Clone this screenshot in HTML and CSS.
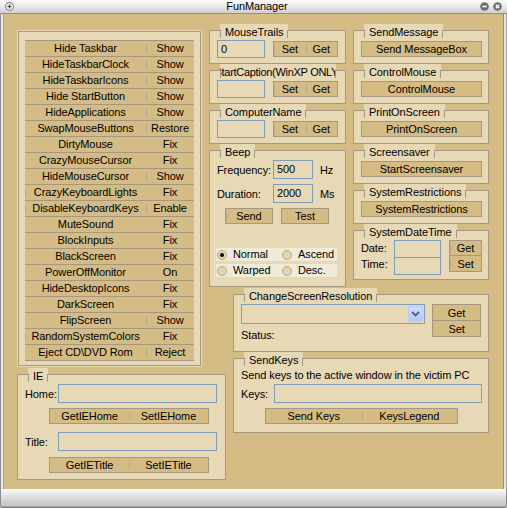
FILE: index.html
```html
<!DOCTYPE html>
<html>
<head>
<meta charset="utf-8">
<title>FunManager</title>
<link rel="stylesheet" href="styles.css">
</head>
<body>
<div class="win">
  <div class="title">
    <div class="tl">
      <svg class="tico" width="9" height="9" viewBox="0 0 9 9"><circle cx="4.5" cy="4.5" r="4" fill="#f4f4f4" stroke="#7a7a7a"/><path d="M4.5 2.5v4M2.5 4.5h4" stroke="#444" stroke-width="1.2"/></svg>
    </div>
    <div class="ttext">FunManager</div>
    <div class="tr">
      <svg class="tico" width="9" height="9" viewBox="0 0 9 9"><circle cx="4.5" cy="4.5" r="4.3" fill="#6e6e6e"/><path d="M2.3 4.5h4.4" stroke="#fff" stroke-width="1.6"/></svg>
      <svg class="tico" width="9" height="9" viewBox="0 0 9 9"><circle cx="4.5" cy="4.5" r="4.3" fill="#6e6e6e"/><path d="M2.8 2.8l3.4 3.4M6.2 2.8l-3.4 3.4" stroke="#fff" stroke-width="1.4"/></svg>
    </div>
  </div>
  <div class="mid">
    <div class="side"></div>
    <div class="client">
      <div class="pnl">
        <div class="pnl-in">
          <div class="row"><span class="bl">Hide Taskbar</span><span class="br tk">Show</span></div>
          <div class="row"><span class="bl">HideTaskbarClock</span><span class="br tk">Show</span></div>
          <div class="row"><span class="bl">HideTaskbarIcons</span><span class="br tk">Show</span></div>
          <div class="row"><span class="bl">Hide StartButton</span><span class="br tk">Show</span></div>
          <div class="row"><span class="bl">HideApplications</span><span class="br tk">Show</span></div>
          <div class="row"><span class="bl">SwapMouseButtons</span><span class="br tk">Restore</span></div>
          <div class="row"><span class="bl">DirtyMouse</span><span class="br">Fix</span></div>
          <div class="row"><span class="bl">CrazyMouseCursor</span><span class="br">Fix</span></div>
          <div class="row"><span class="bl">HideMouseCursor</span><span class="br tk">Show</span></div>
          <div class="row"><span class="bl lt">CrazyKeyboardLights</span><span class="br">Fix</span></div>
          <div class="row"><span class="bl lt">DisableKeyboardKeys</span><span class="br tk">Enable</span></div>
          <div class="row"><span class="bl">MuteSound</span><span class="br">Fix</span></div>
          <div class="row"><span class="bl">BlockInputs</span><span class="br">Fix</span></div>
          <div class="row"><span class="bl">BlackScreen</span><span class="br">Fix</span></div>
          <div class="row"><span class="bl">PowerOffMonitor</span><span class="br">On</span></div>
          <div class="row"><span class="bl">HideDesktopIcons</span><span class="br">Fix</span></div>
          <div class="row"><span class="bl">DarkScreen</span><span class="br">Fix</span></div>
          <div class="row"><span class="bl">FlipScreen</span><span class="br tk">Show</span></div>
          <div class="row"><span class="bl lt">RandomSystemColors</span><span class="br">Fix</span></div>
          <div class="row"><span class="bl">Eject CD\DVD Rom</span><span class="br tk">Reject</span></div>
        </div>
      </div>

      <div class="ie">
        <div class="fr fr-ie">
          <div class="cap">IE</div>
          <div class="frow"><span class="lab w33">Home:</span><span class="tb w160"></span></div>
          <div class="pair w160 ml24 mt5"><span>GetIEHome</span><span>SetIEHome</span></div>
          <div class="frow mt8"><span class="lab w33">Title:</span><span class="tb w160"></span></div>
          <div class="pair w160 ml24 mt6"><span>GetIETitle</span><span>SetIETitle</span></div>
        </div>
      </div>

      <div class="colm">
        <div class="fr h34 fr-tb">
          <div class="cap">MouseTrails</div>
          <span class="tb w48">0</span>
          <div class="pair w65 mt1"><span class="tk">Set</span><span>Get</span></div>
        </div>
        <div class="fr h34 fr-tb">
          <div class="cap cap-clip">StartCaption(WinXP ONLY)</div>
          <span class="tb w48"></span>
          <div class="pair w65 mt1"><span class="tk">Set</span><span>Get</span></div>
        </div>
        <div class="fr h34 fr-tb">
          <div class="cap">ComputerName</div>
          <span class="tb w48"></span>
          <div class="pair w65 mt1"><span class="tk">Set</span><span>Get</span></div>
        </div>
        <div class="fr fr-beep">
          <div class="cap">Beep</div>
          <div class="frow"><span class="lab w56">Frequency:</span><span class="tb w40">500</span><span class="unit">Hz</span></div>
          <div class="frow mt5"><span class="lab w56">Duration:</span><span class="tb w40">2000</span><span class="unit">Ms</span></div>
          <div class="btnrow">
            <span class="btn w48 tkl">Send</span>
            <span class="btn w48">Test</span>
          </div>
          <div class="radios">
            <div class="rrow">
              <span class="ropt"><span class="rd on"></span>Normal</span>
              <span class="ropt"><span class="rd"></span>Ascend</span>
            </div>
            <div class="rrow">
              <span class="ropt"><span class="rd"></span>Warped</span>
              <span class="ropt"><span class="rd"></span>Desc.</span>
            </div>
          </div>
        </div>
      </div>

      <div class="colr">
        <div class="fr h34 fr-r">
          <div class="cap">SendMessage</div>
          <span class="btn full">Send MessageBox</span>
        </div>
        <div class="fr h34 fr-r">
          <div class="cap">ControlMouse</div>
          <span class="btn full">ControlMouse</span>
        </div>
        <div class="fr h34 fr-r">
          <div class="cap">PrintOnScreen</div>
          <span class="btn full">PrintOnScreen</span>
        </div>
        <div class="fr h34 fr-r">
          <div class="cap">Screensaver</div>
          <span class="btn full">StartScreensaver</span>
        </div>
        <div class="fr h34 fr-r">
          <div class="cap">SystemRestrictions</div>
          <span class="btn full">SystemRestrictions</span>
        </div>
        <div class="fr fr-dt">
          <div class="cap">SystemDateTime</div>
          <div class="dtl"><span>Date:</span><span>Time:</span></div>
          <div class="tbstack"><span></span><span></span></div>
          <div class="bstack w33"><span class="tkl">Get</span><span class="tkl">Set</span></div>
        </div>
      </div>

      <div class="colb">
        <div class="fr fr-csr">
          <div class="cap">ChangeScreenResolution</div>
          <div class="csl">
            <div class="combo">
              <span class="cval"></span>
              <span class="cbtn"><svg width="9" height="6" viewBox="0 0 9 6"><path d="M1 1l3.5 3.5L8 1" fill="none" stroke="#4d6185" stroke-width="1.8"/></svg></span>
            </div>
            <div class="status">Status:</div>
          </div>
          <div class="bstack w49"><span>Get</span><span>Set</span></div>
        </div>
        <div class="fr fr-sk">
          <div class="cap">SendKeys</div>
          <div class="sktext">Send keys to the active window in the victim PC</div>
          <div class="frow mt2"><span class="lab w33">Keys:</span><span class="tb grow"></span></div>
          <div class="pair w193 ml24 mt5"><span>Send Keys</span><span>KeysLegend</span></div>
        </div>
      </div>
    </div>
    <div class="side"></div>
  </div>
  <div class="bottom"></div>
</div>
</body>
</html>
```

FILE: styles.css
```css
:root {
  --tan: #D5BC85;
  --lt: #E7D8B6;
  --ln: #A69783;
  --bl: #7F9DB9;
  --tick: #B9A78A;
}
* { box-sizing: border-box; }
html, body { margin: 0; padding: 0; background: #d8d8d8; }
body {
  font-family: "Liberation Sans", Arial, sans-serif;
  font-size: 11px;
  letter-spacing: -0.1px;
  color: #000;
}
.win {
  width: 507px;
  height: 508px;
  display: flex;
  flex-direction: column;
  overflow: hidden;
}
.title {
  height: 14px;
  display: grid;
  grid-template-columns: 1fr auto 1fr;
  align-items: center;
  background: linear-gradient(to bottom, #fbfbfb 0%, #e6e6e6 55%, #cfcfcf 100%);
  border-bottom: 1px solid #8f8f8f;
  padding: 0 5px 0 5px;
}
.ttext { line-height: 13px; padding-left: 7px; }
.tl { display: flex; align-items: center; }
.tr { display: flex; justify-content: flex-end; gap: 4px; align-items: center; }
.tico { display: block; }
.mid { display: flex; height: 475px; }
.side {
  width: 4px;
  background: linear-gradient(to right, #8e8e8e 0 1px, #e6e6e6 1px 3px, #a4a4a4 3px 4px);
}
.bottom {
  height: 19px;
  background: linear-gradient(to bottom, #fdfdfd 0px, #eeeeee 3px, #dcdcdc 9px, #c4c4c4 17px, #7c7c7c 18px, #7c7c7c 19px);
  border-left: 1px solid #8e8e8e;
  border-right: 1px solid #8e8e8e;
  border-radius: 0 0 2px 2px;
}

.client {
  width: 499px;
  height: 475px;
  background: var(--tan);
  display: grid;
  grid-template-columns: 13px 185px 7px 17px 7px 113px 7px 136px 14px;
  grid-template-rows: 10px 6px 257px 80px 66px 47px 9px;
}

/* left panel */
.pnl { grid-column: 2; grid-row: 3 / 5; background: var(--lt); padding: 1px; }
.pnl-in { border: 1px solid var(--ln); height: 100%; padding: 8px 6px 3px 6px; }
.row {
  height: 16px;
  display: flex;
  background: var(--tan);
  border-top: 1px solid var(--ln);
  line-height: 15px;
}
.row:last-child { border-bottom: 1px solid var(--ln); height: 17px; }
.row span { display: flex; justify-content: center; align-items: center; position: relative; white-space: nowrap; }
.bl { width: 121px; }
.br { flex: 1; }
.tk::before, .lt::before, .tkl::before {
  content: "";
  position: absolute;
  left: 0;
  top: 4px;
  height: 8px;
  width: 1px;
  background: var(--tick);
}

/* frames */
.fr {
  position: relative;
  background: var(--lt);
  border: 1px solid var(--ln);
}
.h34 { height: 34px; }
.cap {
  position: absolute;
  top: -7px;
  left: 10px;
  height: 14px;
  line-height: 16px;
  padding: 0 5px;
  background: var(--lt);
  white-space: nowrap;
}
.cap::before {
  content: "";
  position: absolute;
  left: 0; right: 0; top: 6px; bottom: 0;
  border-left: 1px solid var(--ln);
  border-right: 1px solid var(--ln);
}
.cap-clip {
  width: 116px;
  padding: 0;
  overflow: hidden;
  display: flex;
  justify-content: center;
  letter-spacing: -0.3px;
}
.cap-clip::before { z-index: 1; }

.tb {
  display: flex;
  align-items: center;
  height: 19px;
  border: 1px solid var(--bl);
  background: var(--lt);
  padding: 0 0 0 3px;
  line-height: 13px;
}
.w48 { width: 48px; height: 18px; }
.w40 { width: 40px; }
.w160 { width: 160px; }
.w33 { width: 33px; flex: none; }
.w56 { width: 56px; flex: none; }
.w65 { width: 65px; }
.w49 { width: 49px; }
.w193 { width: 193px; }
.grow { flex: 1; }
.mt1 { margin-top: 1px; }
.mt2 { margin-top: 2px; }
.mt5 { margin-top: 5px; }
.mt6 { margin-top: 6px; }
.mt8 { margin-top: 8px; }
.ml24 { margin-left: 24px; }

.btn, .pair span, .bstack span {
  display: flex;
  align-items: center;
  justify-content: center;
  background: var(--tan);
  white-space: nowrap;
  position: relative;
}
.btn { height: 16px; border: 1px solid var(--ln); line-height: 14px; }
.full { width: 100%; }
.pair {
  display: flex;
  height: 16px;
  border: 1px solid var(--ln);
  line-height: 14px;
}
.pair span { flex: 1; }
.pair span + span::before {
  content: "";
  position: absolute;
  left: 0; top: 3px; height: 8px; width: 1px;
  background: var(--tick);
}
.pair span.tk::before { left: 0; }

.frow { display: flex; align-items: center; height: 19px; }
.lab { white-space: nowrap; }
.unit { margin-left: 7px; }

/* middle column */
.colm {
  grid-column: 4 / 7;
  grid-row: 2 / 4;
  padding-top: 6px;
  display: flex;
  flex-direction: column;
  gap: 6px;
}
.fr-tb {
  display: flex;
  align-items: flex-start;
  gap: 8px;
  padding: 9px 7px 0 7px;
}
.fr-beep { flex: 1; padding: 9px 7px 0 7px; }
.btnrow { display: flex; gap: 8px; margin-top: 5px; padding-left: 8px; }
.radios {
  margin-top: 24px;
  margin-left: -1px;
  width: 121px;
  display: flex;
  flex-direction: column;
  gap: 3px;
}
.rrow {
  height: 13px;
  display: flex;
  background: #F0EBD9;
  line-height: 13px;
}
.ropt { display: flex; align-items: center; gap: 6px; padding-left: 1px; }
.ropt:first-child { width: 65px; }
.rd {
  width: 10px; height: 10px;
  border-radius: 50%;
  border: 1px solid #B7A789;
  background: #E3D3AE;
  display: flex;
  align-items: center;
  justify-content: center;
}
.rd.on::after {
  content: "";
  width: 4px; height: 4px;
  border-radius: 50%;
  background: #000;
}

/* right column */
.colr {
  grid-column: 8;
  grid-row: 2 / 4;
  padding-top: 6px;
  display: flex;
  flex-direction: column;
  gap: 6px;
}
.fr-r { padding: 10px 6px 0 7px; }
.fr-dt {
  height: 50px;
  display: flex;
  align-items: flex-start;
  padding: 9px 6px 0 7px;
}
.dtl { width: 33px; display: flex; flex-direction: column; }
.dtl span { height: 16px; line-height: 16px; }
.tbstack {
  width: 48px;
  height: 35px;
  border: 1px solid var(--bl);
  display: flex;
  flex-direction: column;
}
.tbstack span { flex: 1; }
.tbstack span + span { border-top: 1px solid var(--bl); }
.bstack { display: flex; flex-direction: column; margin-left: 8px; }
.bstack span { height: 16px; border: 1px solid var(--ln); line-height: 14px; }
.bstack span + span { border-top: none; }
.fr-csr .bstack { margin-left: 7px; }
.fr-csr .bstack span:first-child { height: 17px; }

/* bottom right */
.colb {
  grid-column: 6 / 9;
  grid-row: 4 / 6;
  padding-top: 7px;
  display: flex;
  flex-direction: column;
  gap: 6px;
}
.fr-csr {
  height: 58px;
  display: flex;
  align-items: flex-start;
  padding: 9px 6px 0 7px;
}
.csl { width: 184px; }
.combo {
  height: 20px;
  border: 1px solid var(--bl);
  background: var(--lt);
  display: flex;
  padding: 1px;
}
.cval { flex: 1; }
.cbtn {
  width: 15px;
  background: linear-gradient(to bottom, #CFDCFD, #B5C8F7);
  border: 1px solid #B9CCF6;
  border-radius: 2px;
  display: flex;
  align-items: center;
  justify-content: center;
}
.status { margin-top: 5px; line-height: 13px; }
.fr-sk { flex: 1; padding: 10px 6px 0 7px; }
.sktext { line-height: 13px; white-space: nowrap; }

/* IE */
.ie {
  grid-column: 2 / 5;
  grid-row: 5 / 7;
  padding-top: 7px;
  display: flex;
  flex-direction: column;
}
.fr-ie { flex: 1; padding: 9px 8px 0 7px; }
.tkl { position: relative; }
```
